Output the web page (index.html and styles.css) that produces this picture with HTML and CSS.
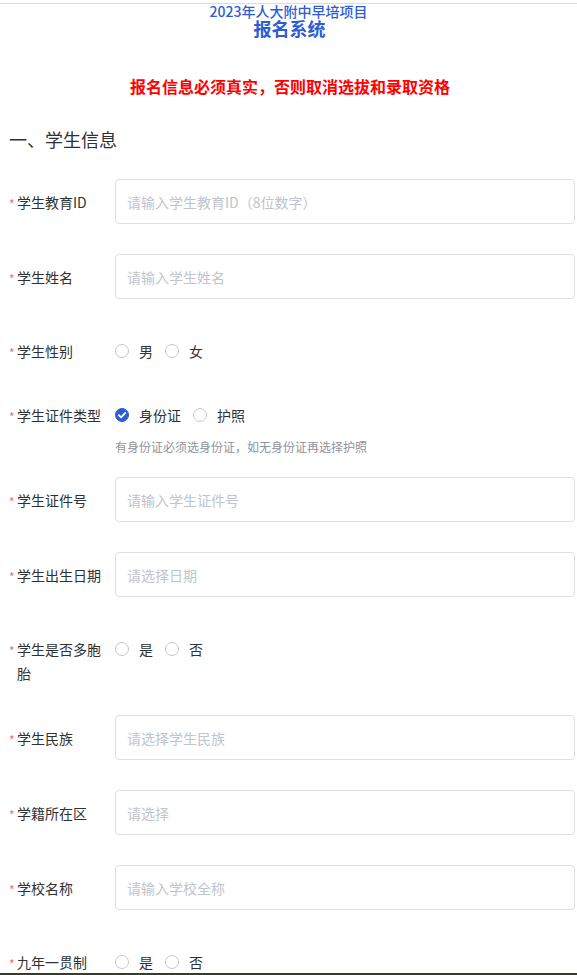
FILE: index.html
```html
<!DOCTYPE html>
<html lang="zh">
<head>
<meta charset="utf-8">
<title>报名系统</title>
<link rel="stylesheet" href="styles.css">
</head>
<body>
<div class="topline"></div>
<header class="header">
  <div class="title1">2023年人大附中早培项目</div>
  <div class="title2">报名系统</div>
</header>
<p class="notice">报名信息必须真实，否则取消选拔和录取资格</p>
<h2 class="section">一、学生信息</h2>
<form class="form">
  <div class="row row-input">
    <div class="label"><span class="star">*</span><span class="ltext">学生教育ID</span></div>
    <div class="input"><span class="ph">请输入学生教育ID（8位数字）</span></div>
  </div>
  <div class="row row-input">
    <div class="label"><span class="star">*</span><span class="ltext">学生姓名</span></div>
    <div class="input"><span class="ph">请输入学生姓名</span></div>
  </div>
  <div class="row row-radio">
    <div class="label"><span class="star">*</span><span class="ltext">学生性别</span></div>
    <div class="radios">
      <span class="radio"><span class="circle"></span><span class="rtext">男</span></span>
      <span class="radio"><span class="circle"></span><span class="rtext">女</span></span>
    </div>
  </div>
  <div class="row row-radio row-hint">
    <div class="label"><span class="star">*</span><span class="ltext">学生证件类型</span></div>
    <div class="field">
      <div class="radios">
        <span class="radio"><span class="circle checked"><svg viewBox="0 0 14 14" width="14" height="14"><path d="M3.8 7.2 L6.1 9.4 L10.3 4.9" fill="none" stroke="#fff" stroke-width="1.8" stroke-linecap="round" stroke-linejoin="round"/></svg></span><span class="rtext">身份证</span></span>
        <span class="radio"><span class="circle"></span><span class="rtext">护照</span></span>
      </div>
      <div class="hint">有身份证必须选身份证，如无身份证再选择护照</div>
    </div>
  </div>
  <div class="row row-input">
    <div class="label"><span class="star">*</span><span class="ltext">学生证件号</span></div>
    <div class="input"><span class="ph">请输入学生证件号</span></div>
  </div>
  <div class="row row-input">
    <div class="label"><span class="star">*</span><span class="ltext">学生出生日期</span></div>
    <div class="input"><span class="ph">请选择日期</span></div>
  </div>
  <div class="row row-radio">
    <div class="label"><span class="star">*</span><span class="ltext">学生是否多胞胎</span></div>
    <div class="radios">
      <span class="radio"><span class="circle"></span><span class="rtext">是</span></span>
      <span class="radio"><span class="circle"></span><span class="rtext">否</span></span>
    </div>
  </div>
  <div class="row row-input">
    <div class="label"><span class="star">*</span><span class="ltext">学生民族</span></div>
    <div class="input"><span class="ph">请选择学生民族</span></div>
  </div>
  <div class="row row-input">
    <div class="label"><span class="star">*</span><span class="ltext">学籍所在区</span></div>
    <div class="input"><span class="ph">请选择</span></div>
  </div>
  <div class="row row-input">
    <div class="label"><span class="star">*</span><span class="ltext">学校名称</span></div>
    <div class="input"><span class="ph">请输入学校全称</span></div>
  </div>
  <div class="row row-radio">
    <div class="label"><span class="star">*</span><span class="ltext">九年一贯制</span></div>
    <div class="radios">
      <span class="radio"><span class="circle"></span><span class="rtext">是</span></span>
      <span class="radio"><span class="circle"></span><span class="rtext">否</span></span>
    </div>
  </div>
</form>
<div class="bottombar"></div>
</body>
</html>
```
FILE: styles.css
```css
html, body {
  margin: 0;
  padding: 0;
  background: #fff;
}
body {
  font-family: "Noto Sans CJK SC", "Noto Sans", sans-serif;
  color: #303133;
  width: 577px;
  height: 975px;
  overflow: hidden;
}
.topline {
  height: 3px;
  border-bottom: 1px solid #dcdcdc;
}
.header {
  text-align: center;
  color: #2d5cd5;
}
.title1 {
  font-size: 14px;
  line-height: 15px;
  font-weight: 500;
}
.title2 {
  font-size: 18px;
  line-height: 19px;
  font-weight: 700;
  padding-left: 2px;
}
.notice {
  margin: 37px 0 0;
  text-align: center;
  color: #ff0000;
  font-size: 16px;
  line-height: 22px;
  font-weight: 700;
  padding-left: 3px;
}
.section {
  margin: 30px 0 0;
  padding-left: 9px;
  font-size: 18px;
  line-height: 24px;
  font-weight: 400;
  color: #303133;
}
.form {
  margin-top: 28px;
  padding: 0 2px 0 9px;
}
.row {
  display: flex;
  margin-bottom: 30px;
}
.row-input {
  align-items: center;
  height: 45px;
}
.row-radio {
  align-items: flex-start;
}
.label {
  flex: 0 0 106px;
  display: flex;
  align-items: flex-start;
  font-size: 14px;
  line-height: 24px;
  color: #303133;
}
.row-radio .label,
.row-radio .radios {
  padding-top: 10px;
}
.row-hint {
  margin-bottom: 20px;
}
.star {
  flex: 0 0 8px;
  height: 24px;
  box-sizing: border-box;
  padding-top: 4px;
  color: #f56c6c;
  font-size: 12px;
  line-height: 20px;
}
.ltext {
  flex: 1;
  padding-right: 12px;
}
.input {
  flex: 1;
  height: 45px;
  box-sizing: border-box;
  border: 1px solid #dcdfe6;
  border-radius: 4px;
  padding: 0 11px;
  display: flex;
  align-items: center;
  font-size: 14px;
}
.ph {
  color: #c0c4cc;
}
.radios {
  display: flex;
  align-items: center;
  height: 24px;
  font-size: 14px;
  line-height: 24px;
}
.radio {
  display: flex;
  align-items: center;
  margin-right: 12px;
}
.circle {
  width: 14px;
  height: 14px;
  box-sizing: border-box;
  border: 1px solid #c4c7cd;
  border-radius: 50%;
  margin-right: 10px;
  display: flex;
}
.circle.checked {
  background: #2d5cd5;
  border-color: #2d5cd5;
}
.circle.checked svg {
  margin: -1px;
}
.rtext {
  color: #303133;
}
.field {
  display: flex;
  flex-direction: column;
}
.hint {
  margin-top: 10px;
  font-size: 12px;
  line-height: 20px;
  color: #909399;
}
.bottombar {
  position: fixed;
  left: 0;
  right: 0;
  bottom: 0;
  height: 2px;
  background: #363d2c;
}
```
